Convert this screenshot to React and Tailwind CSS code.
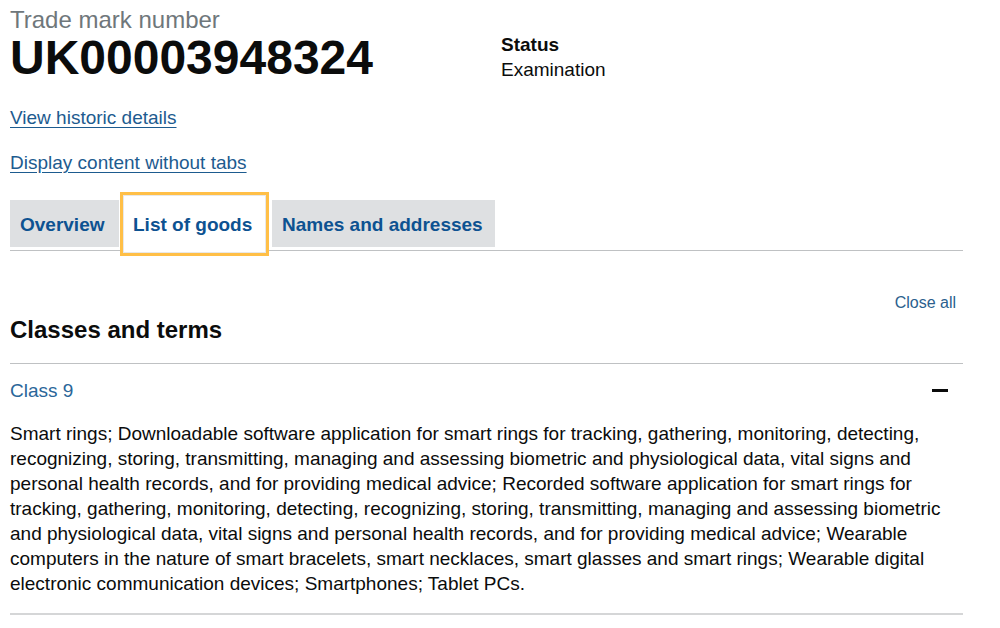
import React from "react";

const FONT = { fontFamily: '"Liberation Sans", Arial, Helvetica, sans-serif' };

export default function App() {
  return (
    <div className="min-h-[628px] w-[1000px] bg-white text-[#0b0c0c]" style={FONT}>
      <div className="w-[963px] pl-[10px]">
        {/* Header */}
        <div className="flex">
          <div className="w-[491px] pt-[6px]">
            <div className="text-[24px] leading-[28px] text-[#6f777b]">Trade mark number</div>
            <div className="text-[48px] font-bold leading-[48px]">UK00003948324</div>
          </div>
          <div className="pt-[32px]">
            <div className="text-[19px] font-bold leading-[25px]">Status</div>
            <div className="text-[19px] leading-[25px]">Examination</div>
          </div>
        </div>

        {/* Links */}
        <div className="mt-[23px] text-[19px] leading-[25px]">
          <a href="#" className="text-[#1d5b8f] underline underline-offset-[3px]">View historic details</a>
        </div>
        <div className="mt-[20px] text-[19px] leading-[25px]">
          <a href="#" className="text-[#1d5b8f] underline underline-offset-[3px]">Display content without tabs</a>
        </div>

        {/* Tabs */}
        <div className="mt-[25px] flex items-start border-b border-[#bfc1c3]">
          <div className="flex h-[47px] w-[109px] items-center bg-[#dee0e2] pl-[10px] pt-[3px] text-[19px] font-bold text-[#0d5291]">
            Overview
          </div>
          <div className="relative z-10 -mb-[6px] -mt-[8px] ml-[1px] h-[64px] w-[149px] border-[3px] border-[#ffbf47] bg-white">
            <div className="flex h-full w-full items-center border border-[#e8e8e8] pl-[9px] pt-[2px] text-[19px] font-bold text-[#0d5291]">
              List of goods
            </div>
          </div>
          <div className="ml-[3px] flex h-[47px] w-[223px] items-center bg-[#dee0e2] pl-[10px] pt-[3px] text-[19px] font-bold text-[#0d5291]">
            Names and addresses
          </div>
        </div>

        {/* Close all */}
        <div className="mt-[42px] flex justify-end pr-[7px]">
          <a href="#" className="text-[16px] leading-[20px] text-[#2b5f8e]">Close all</a>
        </div>

        <h2 className="mt-[2px] text-[24px] font-bold leading-[30px]">Classes and terms</h2>

        <div className="mt-[18px] border-t border-[#bfc1c3]">
          <div className="flex items-center justify-between pr-[15px] pt-[14px]">
            <span className="text-[19px] leading-[25px] text-[#2a6699]">Class 9</span>
            <span className="block h-[3px] w-[16px] bg-[#0b0c0c]" />
          </div>
          <p className="mt-[18px] text-[19px] leading-[25px]">
            Smart rings; Downloadable software application for smart rings for tracking, gathering, monitoring, detecting,
            recognizing, storing, transmitting, managing and assessing biometric and physiological data, vital signs and
            personal health records, and for providing medical advice; Recorded software application for smart rings for
            tracking, gathering, monitoring, detecting, recognizing, storing, transmitting, managing and assessing biometric
            and physiological data, vital signs and personal health records, and for providing medical advice; Wearable
            computers in the nature of smart bracelets, smart necklaces, smart glasses and smart rings; Wearable digital
            electronic communication devices; Smartphones; Tablet PCs.
          </p>
          <div className="mt-[17px] border-t-2 border-[#d5d6d7]" />
        </div>
      </div>
    </div>
  );
}
